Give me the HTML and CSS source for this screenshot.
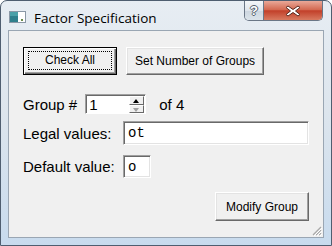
FILE: index.html
```html
<!DOCTYPE html>
<html>
 <head>
  <meta charset="utf-8">
  <title>Factor Specification</title>
  <link rel="stylesheet" href="styles.css">
 </head>
 <body>
  <div class="window">
   <div class="titlebar">
    <svg class="appicon" width="17" height="12" viewBox="0 0 17 12">
     <rect x="0.5" y="0.5" width="16" height="11" fill="#fff" stroke="#8a98a6"/>
     <rect x="1" y="1" width="8" height="10" fill="#2f7f8c"/>
     <rect x="1" y="1" width="8" height="4" fill="#4aa0a8"/>
     <rect x="12" y="8" width="2" height="2" fill="#6c8c4c"/>
    </svg>
    <span class="title">Factor Specification</span>
    <div class="capbtns">
     <div class="capbtn help">?</div>
     <div class="capbtn close">
      <svg width="16" height="12" viewBox="0 0 16 12">
       <path d="M3 1 L8 4.5 L13 1 L15 2.5 L10.5 6 L15 9.5 L13 11 L8 7.5 L3 11 L1 9.5 L5.5 6 L1 2.5 Z" fill="#fff" stroke="#5a2a20" stroke-width="1"/>
      </svg>
     </div>
    </div>
   </div>
   <div class="client">
    <div class="btnrow">
     <button class="btn default"><span class="focus">Check All</span></button>
     <button class="btn">Set Number of Groups</button>
    </div>
    <div class="grouprow">
     <span class="lbl">Group #</span>
     <div class="spinbox">
      <span class="spinval">1</span>
      <div class="arrows">
       <span class="arrow up"></span>
       <span class="arrow down"></span>
      </div>
     </div>
     <span class="lbl">of 4</span>
    </div>
    <div class="fields">
     <span class="lbl">Legal values:</span>
     <div class="field legal">ot</div>
     <span class="lbl">Default value:</span>
     <div class="field defval">o</div>
    </div>
    <div class="actions">
     <button class="btn modify">Modify Group</button>
    </div>
    <svg class="grip" width="12" height="12" viewBox="0 0 12 12">
     <path d="M11 3 L3 11 M11 6 L6 11 M11 9 L9 11" stroke="#a8a8a8" stroke-width="1.2"/>
     <path d="M12 4 L4 12 M12 7 L7 12 M12 10 L10 12" stroke="#fff" stroke-width="1"/>
    </svg>
   </div>
  </div>
 </body>
</html>
```

FILE: styles.css
```css
body {
    margin: 0;
    background: #fff;
}
.window {
    width: 332px;
    height: 246px;
    box-sizing: border-box;
    border: 1px solid #4f5e70;
    border-radius: 7px 7px 0 0;
    background: linear-gradient(#e7edf3, #dde5ed 45%, #c8dbee 100%);
    display: flex;
    flex-direction: column;
    position: relative;
    font-family: "Liberation Sans", Arial, sans-serif;
}
.titlebar {
    height: 29px;
    display: flex;
    align-items: center;
    padding-left: 8px;
}
.appicon {
    margin-top: 3px;
}
.title {
    font-family: "Open Sans", "Liberation Sans", sans-serif;
    font-size: 13.5px;
    color: #000;
    margin-left: 8px;
    margin-top: 4px;
}
.capbtns {
    margin-left: auto;
    margin-right: 8px;
    align-self: flex-start;
    display: flex;
    height: 19px;
    border: 1px solid #6a7686;
    border-top: none;
    border-radius: 0 0 5px 5px;
    overflow: hidden;
}
.capbtn {
    display: flex;
    align-items: center;
    justify-content: center;
}
.help {
    width: 18px;
    background: linear-gradient(#f4f6f8, #dfe5ec 50%, #cdd6e0 51%, #dbe3ea);
    border-right: 1px solid #6a7686;
    color: #fff;
    font: bold 13px "Liberation Sans", Arial, sans-serif;
    text-shadow: 1px 0 #55606c, -1px 0 #55606c, 0 1px #55606c, 0 -1px #55606c;
}
.close {
    width: 58px;
    background: linear-gradient(#e9a898, #d46a52 45%, #c2402a 52%, #d87a60);
}
.client {
    flex: 1;
    margin: 0 7px 7px 7px;
    border: 1px solid #9aa6b3;
    background: #f0f0f0;
    padding: 16px 14px 0 14px;
    position: relative;
    display: flex;
    flex-direction: column;
    font-size: 14px;
}
.btnrow {
    display: flex;
    gap: 9px;
}
.btn {
    font: 12px "Liberation Sans", Arial, sans-serif;
    color: #000;
    height: 28px;
    padding: 0 8px;
    background: #f0f0f0;
    border: 1px solid;
    border-color: #fff #696969 #696969 #fff;
    box-shadow: inset -1px -1px 0 #a0a0a0, inset 1px 1px 0 #e3e3e3;
}
.btn.default {
    width: 94px;
    border: 1px solid #000;
    box-shadow: inset 1px 1px 0 #fff, inset -1px -1px 0 #696969, inset -2px -2px 0 #a0a0a0;
    padding: 3px 4px 4px 4px;
}
.focus {
    display: block;
    height: 100%;
    box-sizing: border-box;
    border: 1px dotted #000;
    line-height: 17px;
}
.grouprow {
    display: flex;
    align-items: center;
    margin-top: 19px;
    height: 20px;
}
.lbl {
    font-size: 15px;
    color: #000;
}
.spinbox {
    width: 61px;
    height: 20px;
    box-sizing: border-box;
    margin: 0 13px 0 8px;
    display: flex;
    background: #fff;
    border: 1px solid;
    border-color: #a0a0a0 #fff #fff #a0a0a0;
    box-shadow: inset 1px 1px 0 #696969;
}
.spinval {
    flex: 1;
    padding: 1px 0 0 3px;
    font-size: 15px;
}
.arrows {
    width: 15px;
    display: flex;
    flex-direction: column;
    padding: 1px 1px 0 0;
}
.arrow {
    flex: 1;
    background: #f0f0f0;
    border: 1px solid;
    border-color: #fff #696969 #696969 #fff;
    position: relative;
}
.arrow::after {
    content: "";
    position: absolute;
    left: 3px;
    top: 2px;
    border-left: 3px solid transparent;
    border-right: 3px solid transparent;
}
.up::after {
    border-bottom: 4px solid #000;
}
.down::after {
    border-top: 4px solid #a0a0a0;
}
.fields {
    display: grid;
    grid-template-columns: 100px auto;
    align-items: center;
    row-gap: 10px;
    margin-top: 7px;
}
.field {
    height: 24px;
    box-sizing: border-box;
    background: #fff;
    border: 1px solid;
    border-color: #a0a0a0 #fff #fff #a0a0a0;
    box-shadow: inset 1px 1px 0 #696969, inset -1px -1px 0 #e3e3e3;
    font: 14px "Liberation Mono", "Courier New", monospace;
    padding: 3px 0 0 4px;
}
.legal {
    width: 186px;
}
.defval {
    width: 28px;
    height: 23px;
}
.actions {
    display: flex;
    justify-content: flex-end;
    margin-top: 14px;
}
.btn.modify {
    width: 94px;
    height: 29px;
}
.grip {
    position: absolute;
    right: 1px;
    bottom: 1px;
}
```
